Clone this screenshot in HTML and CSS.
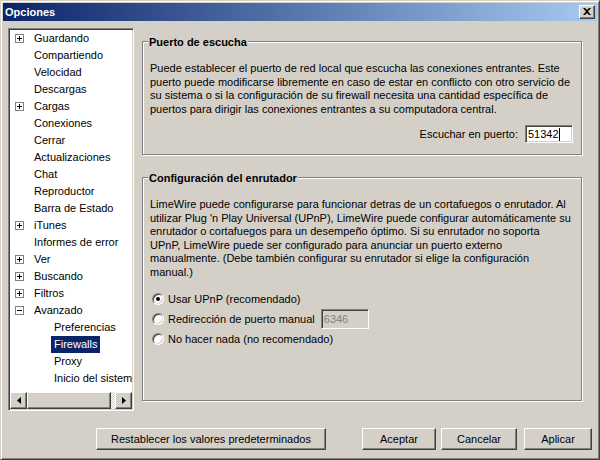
FILE: index.html
```html
<!DOCTYPE html>
<html lang="es">
<head>
  <meta charset="UTF-8">
  <title>Opciones</title>
  <link rel="stylesheet" href="styles.css">
</head>
<body>
  <div class="window">
    <div class="titlebar">
      <span class="title">Opciones</span>
      <span class="close raised">
        <svg width="8" height="7" viewBox="0 0 8 7"><path d="M0 0h2l2 2 2-2h2L5 3.5 8 7H6L4 5 2 7H0l3-3.5z" fill="#000"/></svg>
      </span>
    </div>

    <div class="main">
      <div class="tree">
        <ul class="tree-list">
          <li class="node"><svg class="tg" width="9" height="9"><rect x=".5" y=".5" width="8" height="8" fill="#fff" stroke="#808080"/><path d="M2 4.5h5M4.5 2v5" stroke="#000"/></svg><span class="lbl">Guardando</span></li>
          <li class="node"><span class="tg"></span><span class="lbl">Compartiendo</span></li>
          <li class="node"><span class="tg"></span><span class="lbl">Velocidad</span></li>
          <li class="node"><span class="tg"></span><span class="lbl">Descargas</span></li>
          <li class="node"><svg class="tg" width="9" height="9"><rect x=".5" y=".5" width="8" height="8" fill="#fff" stroke="#808080"/><path d="M2 4.5h5M4.5 2v5" stroke="#000"/></svg><span class="lbl">Cargas</span></li>
          <li class="node"><span class="tg"></span><span class="lbl">Conexiones</span></li>
          <li class="node"><span class="tg"></span><span class="lbl">Cerrar</span></li>
          <li class="node"><span class="tg"></span><span class="lbl">Actualizaciones</span></li>
          <li class="node"><span class="tg"></span><span class="lbl">Chat</span></li>
          <li class="node"><span class="tg"></span><span class="lbl">Reproductor</span></li>
          <li class="node"><span class="tg"></span><span class="lbl">Barra de Estado</span></li>
          <li class="node"><svg class="tg" width="9" height="9"><rect x=".5" y=".5" width="8" height="8" fill="#fff" stroke="#808080"/><path d="M2 4.5h5M4.5 2v5" stroke="#000"/></svg><span class="lbl">iTunes</span></li>
          <li class="node"><span class="tg"></span><span class="lbl">Informes de error</span></li>
          <li class="node"><svg class="tg" width="9" height="9"><rect x=".5" y=".5" width="8" height="8" fill="#fff" stroke="#808080"/><path d="M2 4.5h5M4.5 2v5" stroke="#000"/></svg><span class="lbl">Ver</span></li>
          <li class="node"><svg class="tg" width="9" height="9"><rect x=".5" y=".5" width="8" height="8" fill="#fff" stroke="#808080"/><path d="M2 4.5h5M4.5 2v5" stroke="#000"/></svg><span class="lbl">Buscando</span></li>
          <li class="node"><svg class="tg" width="9" height="9"><rect x=".5" y=".5" width="8" height="8" fill="#fff" stroke="#808080"/><path d="M2 4.5h5M4.5 2v5" stroke="#000"/></svg><span class="lbl">Filtros</span></li>
          <li class="node"><svg class="tg" width="9" height="9"><rect x=".5" y=".5" width="8" height="8" fill="#fff" stroke="#808080"/><path d="M2 4.5h5" stroke="#000"/></svg><span class="lbl">Avanzado</span></li>
          <li class="node child"><span class="lbl">Preferencias</span></li>
          <li class="node child sel"><span class="lbl">Firewalls</span></li>
          <li class="node child"><span class="lbl">Proxy</span></li>
          <li class="node child"><span class="lbl">Inicio del sistema</span></li>
        </ul>
        <div class="hscroll">
          <span class="sb-btn raised"><svg width="4" height="7"><path d="M4 0v7L0 3.5z" fill="#000"/></svg></span>
          <span class="sb-thumb raised"></span>
          <span class="sb-track"></span>
          <span class="sb-btn raised"><svg width="4" height="7"><path d="M0 0v7l4-3.5z" fill="#000"/></svg></span>
        </div>
      </div>

      <div class="panes">
        <div class="group group-port">
          <div class="legend">Puerto de escucha</div>
          <p class="group-text">Puede establecer el puerto de red local que escucha las conexiones entrantes. Este<br>puerto puede modificarse libremente en caso de estar en conflicto con otro servicio de<br>su sistema o si la configuración de su firewall necesita una cantidad específica de<br>puertos para dirigir las conexiones entrantes a su computadora central.</p>
          <div class="port-row">
            <span>Escuchar en puerto:</span>
            <span class="field">51342<span class="caret"></span></span>
          </div>
        </div>

        <div class="group group-router">
          <div class="legend">Configuración del enrutador</div>
          <p class="group-text">LimeWire puede configurarse para funcionar detras de un cortafuegos o enrutador. Al<br>utilizar Plug 'n Play Universal (UPnP), LimeWire puede configurar automáticamente su<br>enrutador o cortafuegos para un desempeño óptimo. Si su enrutador no soporta<br>UPnP, LimeWire puede ser configurado para anunciar un puerto externo<br>manualmente. (Debe también configurar su enrutador si elige la configuración<br>manual.)</p>
          <div class="radios">
            <div class="radio-row"><span class="radio checked"></span>Usar UPnP (recomendado)</div>
            <div class="radio-row"><span class="radio"></span>Redirección de puerto manual<span class="field field-off">6346</span></div>
            <div class="radio-row"><span class="radio"></span>No hacer nada (no recomendado)</div>
          </div>
        </div>
      </div>
    </div>

    <div class="footer">
      <button class="btn btn-reset">Restablecer los valores predeterminados</button>
      <button class="btn btn-ok">Aceptar</button>
      <button class="btn btn-cancel">Cancelar</button>
      <button class="btn btn-apply">Aplicar</button>
    </div>
  </div>
</body>
</html>
```

FILE: styles.css
```css
body {
  margin: 0;
  font-family: "Liberation Sans", Arial, sans-serif;
  font-size: 11px;
  color: #000;
}

.window {
  width: 600px;
  height: 460px;
  box-sizing: border-box;
  background-color: #d4d0c8;
  border: 1px solid;
  border-color: #d4d0c8 #404040 #404040 #d4d0c8;
  box-shadow: inset 1px 1px #fff, inset -1px -1px #808080;
  padding: 2px;
  display: flex;
  flex-direction: column;
}

.raised {
  box-sizing: border-box;
  background-color: #d4d0c8;
  border: 1px solid;
  border-color: #fff #404040 #404040 #fff;
  box-shadow: inset -1px -1px #808080;
}

.titlebar {
  height: 18px;
  display: flex;
  align-items: center;
  justify-content: space-between;
  padding: 0 2px 0 2px;
  background: linear-gradient(to right, #0a246a, #a6caf0);
  color: #fff;
  font-weight: bold;
}

.close {
  width: 16px;
  height: 14px;
  display: flex;
  align-items: center;
  justify-content: center;
  padding: 0 1px 1px 0;
}

.main {
  display: flex;
  gap: 8px;
  height: 383px;
  margin: 7px 0 0 5px;
}

/* tree on the left */
.tree {
  width: 126px;
  box-sizing: border-box;
  border: 1px solid;
  border-color: #808080 #fff #fff #808080;
  box-shadow: inset 1px 1px #404040, inset -1px -1px #d4d0c8;
  padding: 1px;
  background-color: #fff;
  display: flex;
  flex-direction: column;
}

.tree-list {
  flex: 1;
  margin: 0;
  padding: 0;
  list-style: none;
  overflow: hidden;
  white-space: nowrap;
}

.node {
  height: 17px;
  display: flex;
  align-items: center;
  padding-left: 5px;
}

.tg {
  width: 9px;
  height: 9px;
  flex: none;
  margin-right: 7px;
}

.node.child {
  padding-left: 41px;
}

.lbl {
  padding: 0 3px;
  line-height: 17px;
}

.sel .lbl {
  background-color: #0a246a;
  color: #fff;
}

.hscroll {
  height: 17px;
  display: flex;
  flex: none;
}

.sb-btn {
  width: 17px;
  height: 17px;
  display: flex;
  align-items: center;
  justify-content: center;
}

.sb-thumb {
  width: 84px;
  height: 17px;
}

.sb-track {
  flex: 1;
  background: repeating-conic-gradient(#fff 0 25%, #d4d0c8 0 50%) 0 0 / 2px 2px;
}

/* option groups */
.panes {
  width: 440px;
  display: flex;
  flex-direction: column;
}

.group {
  box-sizing: border-box;
  border: 1px solid #808080;
  box-shadow: inset 1px 1px #fff, 1px 1px #fff;
  padding: 0 7px;
}

.group-port {
  margin-top: 13px;
  height: 114px;
}

.group-router {
  margin-top: 22px;
  height: 224px;
}

.legend {
  width: fit-content;
  margin: -6px 0 0 -2px;
  padding: 0 1px;
  background-color: #d4d0c8;
  font-weight: bold;
  line-height: 13px;
}

.group-text {
  margin: 13px 0 0 0;
  line-height: 13.6px;
  white-space: nowrap;
}

.port-row {
  display: flex;
  justify-content: flex-end;
  align-items: center;
  gap: 7px;
  margin: 9px 1px 0 0;
}

.field {
  width: 48px;
  height: 18px;
  box-sizing: border-box;
  border: 1px solid;
  border-color: #808080 #fff #fff #808080;
  box-shadow: inset 1px 1px #404040, inset -1px -1px #d4d0c8;
  background-color: #fff;
  padding-left: 2px;
  display: flex;
  align-items: center;
}

.caret {
  width: 1px;
  height: 13px;
  background-color: #000;
}

.field-off {
  height: 20px;
  margin-left: 6px;
  background-color: #d4d0c8;
  color: #808080;
}

.radios {
  margin-top: 9px;
}

.radio-row {
  height: 20px;
  display: flex;
  align-items: center;
}

.radio {
  width: 12px;
  height: 12px;
  box-sizing: border-box;
  margin: 0 4px 0 2px;
  border-radius: 50%;
  border: 1px solid;
  border-color: #808080 #fff #fff #808080;
  box-shadow: inset 1px 1px #404040, inset -1px -1px #d4d0c8;
  background-color: #fff;
  display: flex;
  align-items: center;
  justify-content: center;
}

.radio.checked::after {
  content: "";
  width: 4px;
  height: 4px;
  border-radius: 50%;
  background-color: #000;
}

/* bottom buttons */
.footer {
  display: flex;
  margin-top: 17px;
  padding: 0 5px 0 93px;
}

.btn {
  height: 22px;
  box-sizing: border-box;
  padding: 0;
  font: inherit;
  color: #000;
  background-color: #d4d0c8;
  border: 1px solid;
  border-color: #fff #404040 #404040 #fff;
  box-shadow: inset -1px -1px #808080;
}

.btn-reset {
  width: 230px;
}

.btn-ok {
  width: 74px;
  margin-left: auto;
}

.btn-cancel {
  width: 76px;
  margin-left: 5px;
}

.btn-apply {
  width: 68px;
  margin-left: 7px;
}
```
